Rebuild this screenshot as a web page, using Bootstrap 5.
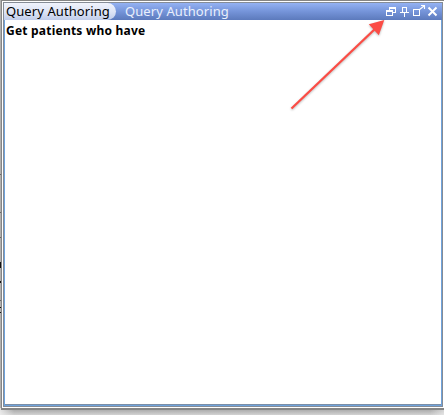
<!DOCTYPE html>
<html lang="en">
<head>
<meta charset="utf-8">
<meta name="viewport" content="width=device-width, initial-scale=1">
<title>Query Authoring</title>
<link href="https://cdn.jsdelivr.net/npm/bootstrap@5.3.0/dist/css/bootstrap.min.css" rel="stylesheet">
<style>
  body { background: #fff; font-family: "Noto Sans", "Open Sans", sans-serif; font-size: 13px; line-height: 16px; color: #000; }
  .desktop { width: 444px; height: 415px; background: linear-gradient(#b0b0b0, #b0b0b0) 0 0 / 1px 408px no-repeat, linear-gradient(90deg, rgba(240,240,240,.85), rgba(240,240,240,0) 14px, rgba(240,240,240,0) 430px, rgba(240,240,240,.6)), linear-gradient(#a6a6a6 409px, #d2d2d2 415px); }
  .outer-frame { width: 443px; height: 410px; margin-left: 1px; border: solid #858585; border-width: 1px 0 2px 1px; background: #fff; padding: 1px 0 1px 1px; }
  .dock { width: 440px; height: 405px; border: 1px solid #858c96; background: #fff; }
  .dock-inner { border: solid #6fa3dc; border-width: 0 1px 1px; box-shadow: inset 0 -1px #7b8fa8; }
  .title-strip { height: 17px; margin: 0 -1px; background: linear-gradient(#94b2f3, #7594d9 50%, #5c7abc); }
  .tab-active { width: 112px; height: 17px; padding-left: 2px; border-radius: 0 9px 9px 0; background: linear-gradient(#f0f3fc, #dce3f5 55%, #c0ccea); }
  .tab-text { letter-spacing: .09px; white-space: nowrap; }
  .tab-idle { color: #e9effc; margin-left: 9px; }
  .query-text { font-weight: 700; font-size: 12px; letter-spacing: .22px; padding: 3px 0 0 1px; }
  .pointer-arrow { left: 280px; top: 10px; filter: drop-shadow(0 1px 1px rgba(0,0,0,.28)); }
  .edge-marks { left: 0; top: 0; }
</style>
</head>
<body>
<main class="desktop position-relative overflow-hidden">
  <section class="outer-frame">
    <div class="dock d-flex flex-column">
      <div class="dock-inner flex-grow-1">
        <header class="title-strip d-flex">
          <div class="tab-active tab-text">Query Authoring</div>
          <div class="tab-idle tab-text">Query Authoring</div>
          <svg class="ms-auto" width="60" height="17" viewBox="382 3 60 17" fill="none" stroke="#fff" role="img" aria-label="Window controls" shape-rendering="crispEdges">
            <path d="M389.500 10V7.500h6v5H393M389 8h7M386.500 10.500h6v5h-6zM386 11h7"/>
            <path d="M402.500 7v6M406.500 7v6M402 7.500h5M406 8v5M400 12.500h9M404.500 13v4"/>
            <path d="M413.500 9.500h6v6h-6z"/>
            <path d="M419 10l5-4M421 5.500h3.500V9" stroke-width="1.100" shape-rendering="auto"/>
            <path d="M428.500 7.500l8 8M436.500 7.500l-8 8" stroke-width="2" shape-rendering="auto"/>
          </svg>
        </header>
        <div class="query-text">Get patients who have</div>
      </div>
    </div>
  </section>
  <svg class="pointer-arrow position-absolute" width="120" height="110" viewBox="280 10 120 110" aria-hidden="true">
    <path d="M291.500 108.500L376 28" stroke="#fb4c45" stroke-width="2.300"/>
    <path d="M384.300 20L368.800 24.300L378.800 35.200z" fill="#fb4c45"/>
  </svg>
  <svg class="edge-marks position-absolute" width="2" height="415" aria-hidden="true" shape-rendering="crispEdges">
    <path d="M0 174h1v1H0zM0 212h1v1H0zM0 237h1v1H0zM0 300h1v1H0z" fill="#666"/>
    <path d="M0 262h1v6H0zM0 281h1v2H0zM0 307h1v1H0zM0 312h1v1H0z" fill="#111"/>
  </svg>
</main>
<script src="https://cdn.jsdelivr.net/npm/bootstrap@5.3.0/dist/js/bootstrap.bundle.min.js"></script>
</body>
</html>
